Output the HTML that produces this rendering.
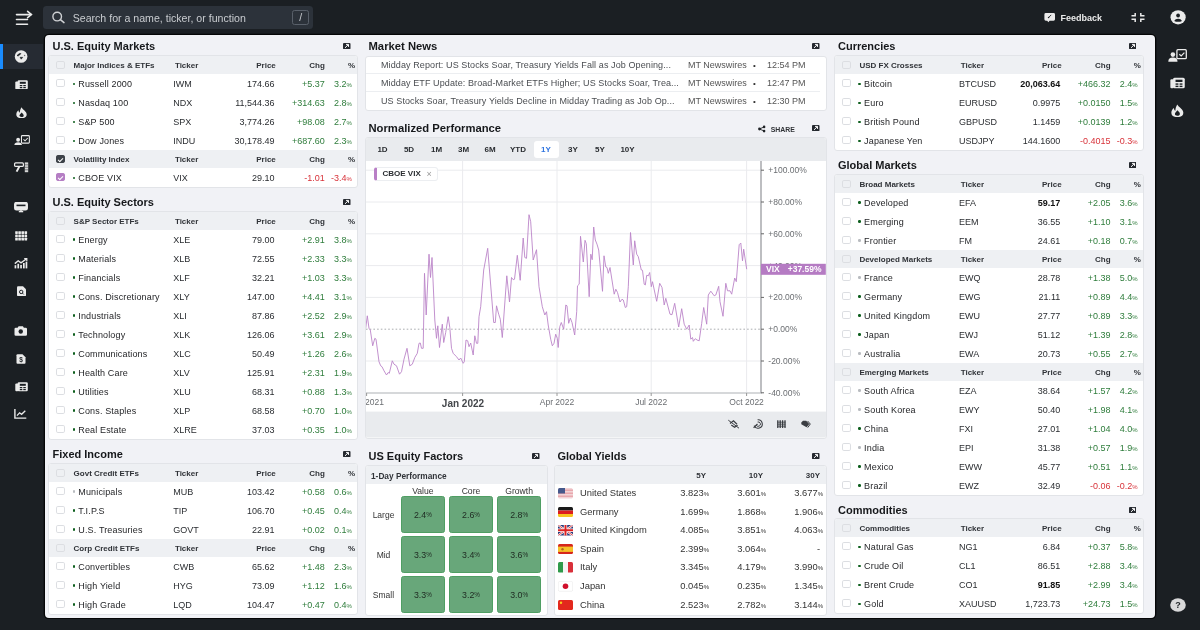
<!DOCTYPE html>
<html><head><meta charset="utf-8"><style>
*{margin:0;padding:0;box-sizing:border-box}
html,body{width:1200px;height:630px;overflow:hidden;-webkit-font-smoothing:antialiased;background:#1b1f23;font-family:"Liberation Sans",sans-serif;color:#2a2d31}
#panel{position:absolute;left:45px;top:35px;width:1110px;height:582.5px;background:#f1f2f6;border-radius:4px;box-shadow:0 0 0 1.3px #050607}
.ttl{position:absolute;font-weight:bold;font-size:11px;line-height:14px;color:#16181b;white-space:nowrap}
.exp{position:absolute}
.card{position:absolute;background:#fff;border:1px solid #e2e4e8;border-radius:3px;overflow:hidden;box-sizing:content-box;margin-left:-1px;margin-top:-1px}
.hd,.rw{position:absolute;left:0;right:0;height:18px;font-size:8px;white-space:nowrap}
.rw{height:19px;font-size:9px}
.hd{background:#eef0f3;font-weight:bold;color:#303338}
.hd span,.rw span{position:absolute;top:1px;line-height:18px}
.rw span{line-height:19px}
.cb{left:6.9px;top:5.2px!important;width:9px;height:8px;border:1px solid #dcdee2;border-radius:1.8px;background:#fff}
.hd .cb{top:5.2px!important;background:#eef0f3}
.cb.dark{background:#3d4249;border-color:#3d4249}
.cb.dark::after,.cb.purple::after{content:'';position:absolute;left:2.2px;top:0.6px;width:2.2px;height:4px;border:solid #fff;border-width:0 1.1px 1.1px 0;transform:rotate(45deg)}
.cb.purple{background:#b57ec4;border-color:#b57ec4}
.hl{left:24.6px}
.dot{left:23.6px;top:8.9px!important;width:2.4px;height:2.4px;background:#0e5f1e;border-radius:50%}
.dot.gray{background:#b9bcc0}
.nm{left:29.3px;color:#252629;letter-spacing:0.15px}
.tk{left:124.3px}
.hd .tk{left:125.9px}
.pr{right:82.5px;text-align:right}
.hd .pr{right:81.2px}
.pr.b{font-weight:bold;color:#111}
.ch{right:32.2px;text-align:right}
.pc{right:5.2px;text-align:right}
.hd .pc{right:2px}
.pc small{font-size:6px}
.nw{position:absolute;left:0;right:0;height:17.6px;font-size:9px;line-height:17.6px;color:#4a4d51;white-space:nowrap}
.nw:not(:last-child)::after{content:"";position:absolute;left:0;right:6px;top:16.6px;height:1px;background:#eceef1}
.nw span{position:absolute;top:0.7px}
.nt{left:15px;letter-spacing:0.1px}
.ns{left:322px;color:#555}
.nb{left:387px;color:#333;font-size:8px}
.ntm{left:401px;color:#555}
.fcol{position:absolute;top:19.6px;width:44.2px;text-align:center;font-size:8.6px;color:#333}
.frow{position:absolute;left:0;width:35px;text-align:center;font-size:8.5px;line-height:10px;color:#333}
.fcell{position:absolute;width:44.2px;height:37px;background:#68a77a;border:1px solid #4f9e63;border-radius:2.5px;text-align:center;line-height:37px;font-size:8.8px;color:#1f2a22}
.fcell small{font-size:6.3px;position:relative;top:-0.8px}
.yh{position:absolute;top:1px;line-height:18px}
.yr{position:absolute;left:0;right:0;height:18.6px;font-size:9.4px;line-height:18.6px;color:#333}
.yr span{position:absolute;top:0}
.flag{left:3px;top:4px!important;line-height:0}
.flag svg{border-radius:1.5px}
.yn{left:25px}
.yv small{font-size:6px}
.tab{position:absolute;top:0;width:30px;text-align:center;font-size:8px;font-weight:bold;line-height:23px}
.chip{position:absolute;height:14.5px;width:64px;background:#fff;border:1px solid #eceef1;border-left:3px solid #b97fc6;border-radius:3px;font-size:8px;line-height:12px;white-space:nowrap}
.chip span{position:absolute;left:6px;top:0.3px;font-weight:bold;color:#2a2d31}
.chip i{position:absolute;left:50px;top:0.3px;font-style:normal;color:#999;font-size:9px}

</style></head><body><div id="root" style="position:absolute;left:0;top:0;width:1200px;height:630px;will-change:transform">
<svg style="position:absolute;left:0;top:0" width="80" height="35" viewBox="0 0 80 35"><g stroke="#ebebeb" stroke-width="1.6" stroke-linecap="round" fill="none"><path d="M16.5 14.6H31M16.5 19.5H27.5M16.5 24.3H27.5"/><path d="M27.6 11.3L31.4 14.6L27.6 17.7"/></g></svg><div style="position:absolute;left:43px;top:6.3px;width:270.3px;height:22.5px;background:#2c323a;border-radius:3.5px"></div><svg style="position:absolute;left:43px;top:0" width="30" height="35" viewBox="43 0 30 35"><circle cx="57.2" cy="16.6" r="4.3" stroke="#cfd1d4" stroke-width="1.4" fill="none"/><path d="M60.4 19.6L64 22.6" stroke="#cfd1d4" stroke-width="1.5" stroke-linecap="round"/></svg><div style="position:absolute;left:72.7px;top:11px;font-size:10.6px;line-height:14px;color:#c9ccd0;white-space:nowrap">Search for a name, ticker, or function</div><div style="position:absolute;left:292px;top:10px;width:17.2px;height:15.3px;border:1px solid #59606a;border-radius:2.5px;color:#c9ccd0;font-size:10.5px;line-height:13.3px;text-align:center">/</div><svg style="position:absolute;left:1040px;top:8px" width="20" height="18" viewBox="1040 8 20 18"><path d="M1045.8 13H1053.6Q1055 13 1055 14.4V19.3Q1055 20.7 1053.6 20.7H1049.6L1048.3 22.3L1047.2 20.7H1045.8Q1044.4 20.7 1044.4 19.3V14.4Q1044.4 13 1045.8 13Z" fill="#ebebeb"/><path d="M1048.6 17.5L1051.2 14.9" stroke="#1b1f23" stroke-width="0.9"/><circle cx="1048.6" cy="17.5" r="0.8" fill="#1b1f23"/></svg><div style="position:absolute;left:1060.5px;top:11.5px;font-size:9px;font-weight:bold;line-height:12px;color:#ebebeb">Feedback</div><svg style="position:absolute;left:1130.7px;top:12.8px" width="14" height="9" viewBox="0 0 14 9"><g stroke="#ebebeb" stroke-width="1.5" fill="none"><path d="M0.5 2.8H4.2V0M0.5 6.2H4.2V9M13.5 2.8H9.8V0M13.5 6.2H9.8V9"/></g></svg><svg style="position:absolute;left:1168px;top:7px" width="20" height="21" viewBox="1168 7 20 21"><ellipse cx="1178.1" cy="17.3" rx="7.6" ry="7.1" fill="#ebebeb"/><circle cx="1178.1" cy="15.5" r="1.9" fill="#1b1f23"/><path d="M1174.2 20.9Q1175.2 18.8 1178.1 18.8Q1181 18.8 1182 20.9Q1180.2 21.8 1178.1 21.8Q1176 21.8 1174.2 20.9Z" fill="#1b1f23"/></svg><svg style="position:absolute;left:1169.5px;top:597.5px" width="16" height="14" viewBox="0 0 16 14"><ellipse cx="8" cy="7" rx="7.8" ry="6.8" fill="#d9d9da"/><text x="8" y="10" font-size="9" font-weight="bold" text-anchor="middle" fill="#1b1f23" font-family="Liberation Sans">?</text></svg><div style="position:absolute;left:0;top:44px;width:43px;height:25.3px;background:#262b33"></div><div style="position:absolute;left:0;top:44px;width:3.1px;height:25.3px;background:#1a8cff"></div><svg style="position:absolute;left:13px;top:48px" width="17" height="17" viewBox="13 48 17 17"><circle cx="21.1" cy="56.5" r="6.3" fill="#ebebeb"/><path d="M17 55.6L19.2 53.7L20.8 53.6L19.6 54.9L18.4 55.8Z" fill="#1b1f23" stroke="#1b1f23" stroke-width="0.8" stroke-linejoin="round"/><circle cx="24.6" cy="55.5" r="0.7" fill="#777"/><path d="M20 57.3L22.8 57.3L21.2 59.2Z" fill="#1b1f23" stroke="#1b1f23" stroke-width="0.5"/></svg><svg style="position:absolute;left:14.600000000000001px;top:79.65px" width="13" height="9.5" viewBox="0 0 13 9.5"><rect x="0.3" y="1.5" width="3" height="7.8" rx="1" fill="#ebebeb"/><rect x="2.6" y="0.2" width="10.2" height="9.1" rx="1.3" fill="#ebebeb"/><rect x="4.8" y="1.8" width="6" height="2" fill="#1b1f23"/><g fill="#1b1f23"><rect x="4.8" y="5" width="2.5" height="1.2"/><rect x="8.3" y="5" width="2.5" height="1.2"/><rect x="4.8" y="7" width="2.5" height="1.2"/><rect x="8.3" y="7" width="2.5" height="1.2"/></g></svg><svg style="position:absolute;left:15.7px;top:106.65px" width="11" height="11.5" viewBox="0 0 11 11.5"><path d="M5.5 0.3C6.5 2.6 10.7 4.5 10.7 7.4C10.7 10 8.4 11.3 5.5 11.3C2.6 11.3 0.3 10 0.3 7.4C0.3 5.5 1.4 4.2 2.5 3.3C2.5 4.6 3.1 5.4 3.8 5.7C3.8 3.6 4.6 1.8 5.5 0.3Z" fill="#ebebeb"/><path d="M5.6 5.4C6.6 6.5 7.7 7.3 7.7 8.5C7.7 9.6 6.8 10 5.5 10C4.3 10 3.4 9.5 3.4 8.6C3.4 7.6 4.6 6.7 5.6 5.4Z" fill="#1b1f23"/></svg><svg style="position:absolute;left:13.82px;top:134.54px" width="15.959999999999999" height="10.92" viewBox="0 0 19 13"><rect x="8.9" y="0.7" width="9.4" height="9" rx="1" stroke="#ebebeb" stroke-width="1.3" fill="none"/><path d="M11.3 5.2L13.2 7L16.4 3.6" stroke="#ebebeb" stroke-width="1.2" fill="none"/><circle cx="4.9" cy="5.6" r="2.3" fill="#ebebeb"/><path d="M0.3 12.8Q0.3 8.6 4.9 8.6Q9.5 8.6 9.5 12.8Z" fill="#ebebeb"/></svg><svg style="position:absolute;left:13.7px;top:162.05px" width="15" height="10.5" viewBox="0 0 15 10.5"><path d="M1.6 0.9H8.4Q9.4 0.9 9.4 1.9V3.4Q9.4 4.4 8.4 4.4H1.6Q0.6 4.4 0.6 3.4V1.9Q0.6 0.9 1.6 0.9Z" stroke="#ebebeb" stroke-width="1.2" fill="none"/><path d="M5.4 4.4L2.6 9.6" stroke="#ebebeb" stroke-width="2"/><rect x="10.8" y="0.4" width="3.4" height="9.8" fill="#d6d6d6"/><g stroke="#1b1f23" stroke-width="0.5"><path d="M10.8 2.8H14.2M10.8 5.3H14.2M10.8 7.8H14.2"/></g></svg><svg style="position:absolute;left:14.2px;top:202.25px" width="14" height="10.5" viewBox="0 0 14 10.5"><rect x="0.8" y="0.6" width="12.4" height="7.2" rx="1.6" stroke="#ebebeb" stroke-width="1.5" fill="#ebebeb"/><rect x="2.5" y="2.6" width="9" height="1.6" fill="#1b1f23"/><path d="M4.8 9.6H9.2" stroke="#ebebeb" stroke-width="1.4"/><rect x="6.3" y="7.8" width="1.4" height="1.8" fill="#ebebeb"/></svg><svg style="position:absolute;left:15.0px;top:230.8px" width="12.5" height="10" viewBox="0 0 12.5 10"><rect x="0.2" y="0.2" width="2.6" height="2.8" rx="0.4" fill="#ebebeb"/><rect x="3.3000000000000003" y="0.2" width="2.6" height="2.8" rx="0.4" fill="#ebebeb"/><rect x="6.4" y="0.2" width="2.6" height="2.8" rx="0.4" fill="#ebebeb"/><rect x="9.5" y="0.2" width="2.6" height="2.8" rx="0.4" fill="#ebebeb"/><rect x="0.2" y="3.5" width="2.6" height="2.8" rx="0.4" fill="#ebebeb"/><rect x="3.3000000000000003" y="3.5" width="2.6" height="2.8" rx="0.4" fill="#ebebeb"/><rect x="6.4" y="3.5" width="2.6" height="2.8" rx="0.4" fill="#ebebeb"/><rect x="9.5" y="3.5" width="2.6" height="2.8" rx="0.4" fill="#ebebeb"/><rect x="0.2" y="6.8" width="2.6" height="2.8" rx="0.4" fill="#ebebeb"/><rect x="3.3000000000000003" y="6.8" width="2.6" height="2.8" rx="0.4" fill="#ebebeb"/><rect x="6.4" y="6.8" width="2.6" height="2.8" rx="0.4" fill="#ebebeb"/><rect x="9.5" y="6.8" width="2.6" height="2.8" rx="0.4" fill="#ebebeb"/></svg><svg style="position:absolute;left:14.25px;top:258.05px" width="13.5" height="10.5" viewBox="0 0 13.5 10.5"><path d="M0.8 5.6L4.2 2.8L7 4.8L12.6 0.8" stroke="#ebebeb" stroke-width="1.4" fill="none"/><path d="M10.2 0.6H12.8V3.2" stroke="#ebebeb" stroke-width="1.2" fill="none"/><g fill="#ebebeb"><rect x="0.6" y="7.2" width="1.7" height="3.2"/><rect x="3.4" y="5.8" width="1.7" height="4.6"/><rect x="6.2" y="6.9" width="1.7" height="3.5"/><rect x="9" y="5" width="1.7" height="5.4"/><rect x="11.6" y="3.8" width="1.7" height="6.6"/></g></svg><svg style="position:absolute;left:15.7px;top:285.55px" width="11" height="10.5" viewBox="0 0 11 10.5"><path d="M1 1.4Q1 0.3 2.1 0.3H7L10 3.3V9.2Q10 10.2 9 10.2H2.1Q1 10.2 1 9.1Z" fill="#ebebeb"/><circle cx="5.2" cy="5.9" r="1.7" stroke="#1b1f23" stroke-width="1" fill="none"/><path d="M6.4 7.1L7.7 8.4" stroke="#1b1f23" stroke-width="1"/></svg><svg style="position:absolute;left:14.45px;top:326.2px" width="13.5" height="10" viewBox="0 0 13.5 10"><path d="M0.5 3Q0.5 1.7 1.8 1.7H3.6L4.6 0.3H8.9L9.9 1.7H11.7Q13 1.7 13 3V8.5Q13 9.7 11.7 9.7H1.8Q0.5 9.7 0.5 8.5Z" fill="#ebebeb"/><circle cx="6.75" cy="5.5" r="2.2" fill="#1b1f23"/></svg><svg style="position:absolute;left:16.2px;top:354.0px" width="10" height="10" viewBox="0 0 10 10"><path d="M0.5 1.3Q0.5 0.2 1.6 0.2H6.5L9.5 3.2V8.8Q9.5 9.8 8.5 9.8H1.6Q0.5 9.8 0.5 8.7Z" fill="#ebebeb"/><text x="5" y="8.4" font-size="6.5" font-weight="bold" text-anchor="middle" fill="#1b1f23" font-family="Liberation Sans">$</text></svg><svg style="position:absolute;left:14.7px;top:382.25px" width="13" height="9.5" viewBox="0 0 13 9.5"><rect x="0.3" y="1.5" width="3" height="7.8" rx="1" fill="#ebebeb"/><rect x="2.6" y="0.2" width="10.2" height="9.1" rx="1.3" fill="#ebebeb"/><rect x="4.8" y="1.8" width="6" height="2" fill="#1b1f23"/><g fill="#1b1f23"><rect x="4.8" y="5" width="2.5" height="1.2"/><rect x="8.3" y="5" width="2.5" height="1.2"/><rect x="4.8" y="7" width="2.5" height="1.2"/><rect x="8.3" y="7" width="2.5" height="1.2"/></g></svg><svg style="position:absolute;left:14.45px;top:409.1px" width="12.5" height="10" viewBox="0 0 12.5 10"><path d="M0.9 0V9.1H12.3" stroke="#ebebeb" stroke-width="1.4" fill="none"/><path d="M3 6.6L5.6 3.8L7.6 5.3L11.3 1.8" stroke="#ebebeb" stroke-width="1.3" fill="none"/></svg><svg style="position:absolute;left:1167.8px;top:48.8px" width="19.0" height="13.0" viewBox="0 0 19 13"><rect x="8.9" y="0.7" width="9.4" height="9" rx="1" stroke="#ebebeb" stroke-width="1.3" fill="none"/><path d="M11.3 5.2L13.2 7L16.4 3.6" stroke="#ebebeb" stroke-width="1.2" fill="none"/><circle cx="4.9" cy="5.6" r="2.3" fill="#ebebeb"/><path d="M0.3 12.8Q0.3 8.6 4.9 8.6Q9.5 8.6 9.5 12.8Z" fill="#ebebeb"/></svg><svg style="position:absolute;left:1170.2px;top:76.9px" width="15" height="12.2" viewBox="0 0 13 9.5"><rect x="0.3" y="1.5" width="3" height="7.8" rx="1" fill="#ebebeb"/><rect x="2.6" y="0.2" width="10.2" height="9.1" rx="1.3" fill="#ebebeb"/><rect x="4.8" y="1.8" width="6" height="2" fill="#1b1f23"/><g fill="#1b1f23"><rect x="4.8" y="5" width="2.5" height="1.2"/><rect x="8.3" y="5" width="2.5" height="1.2"/><rect x="4.8" y="7" width="2.5" height="1.2"/><rect x="8.3" y="7" width="2.5" height="1.2"/></g></svg><svg style="position:absolute;left:1170.95px;top:103.75px" width="12.7" height="13.5" viewBox="0 0 11 11.5"><path d="M5.5 0.3C6.5 2.6 10.7 4.5 10.7 7.4C10.7 10 8.4 11.3 5.5 11.3C2.6 11.3 0.3 10 0.3 7.4C0.3 5.5 1.4 4.2 2.5 3.3C2.5 4.6 3.1 5.4 3.8 5.7C3.8 3.6 4.6 1.8 5.5 0.3Z" fill="#ebebeb"/><path d="M5.6 5.4C6.6 6.5 7.7 7.3 7.7 8.5C7.7 9.6 6.8 10 5.5 10C4.3 10 3.4 9.5 3.4 8.6C3.4 7.6 4.6 6.7 5.6 5.4Z" fill="#1b1f23"/></svg>
<div id="panel"></div>
<div class="ttl" style="left:52.5px;top:39.2px">U.S. Equity Markets</div><svg class="exp" style="left:343px;top:43.3px" width="7.5" height="6.2" viewBox="0 0 7.5 6.2"><rect width="7.5" height="6.2" rx="1" fill="#262a30"/><path d="M2 4.9L5.3 1.6M3 1.4H5.5V3.9" stroke="#fff" stroke-width="1" fill="none"/></svg>
<div class="card" style="left:49px;top:56px;width:308px;height:131px"><div class="hd" style="top:0px"><span class="cb hcb"></span><span class="hl">Major Indices &amp; ETFs</span><span class="tk">Ticker</span><span class="pr">Price</span><span class="ch">Chg</span><span class="pc">%</span></div><div class="rw" style="top:18px"><span class="cb"></span><span class="dot "></span><span class="nm">Russell 2000</span><span class="tk">IWM</span><span class="pr">174.66</span><span class="ch" style="color:#2f7d3c">+5.37</span><span class="pc" style="color:#2f7d3c">3.2<small>%</small></span></div><div class="rw" style="top:37px"><span class="cb"></span><span class="dot "></span><span class="nm">Nasdaq 100</span><span class="tk">NDX</span><span class="pr">11,544.36</span><span class="ch" style="color:#2f7d3c">+314.63</span><span class="pc" style="color:#2f7d3c">2.8<small>%</small></span></div><div class="rw" style="top:56px"><span class="cb"></span><span class="dot "></span><span class="nm">S&amp;P 500</span><span class="tk">SPX</span><span class="pr">3,774.26</span><span class="ch" style="color:#2f7d3c">+98.08</span><span class="pc" style="color:#2f7d3c">2.7<small>%</small></span></div><div class="rw" style="top:75px"><span class="cb"></span><span class="dot "></span><span class="nm">Dow Jones</span><span class="tk">INDU</span><span class="pr">30,178.49</span><span class="ch" style="color:#2f7d3c">+687.60</span><span class="pc" style="color:#2f7d3c">2.3<small>%</small></span></div><div class="hd" style="top:94px"><span class="cb hcb dark"></span><span class="hl">Volatility Index</span><span class="tk">Ticker</span><span class="pr">Price</span><span class="ch">Chg</span><span class="pc">%</span></div><div class="rw" style="top:112px"><span class="cb purple"></span><span class="dot "></span><span class="nm">CBOE VIX</span><span class="tk">VIX</span><span class="pr">29.10</span><span class="ch" style="color:#d8333a">-1.01</span><span class="pc" style="color:#d8333a">-3.4<small>%</small></span></div></div>
<div class="ttl" style="left:52.5px;top:195.2px">U.S. Equity Sectors</div><svg class="exp" style="left:343px;top:199.3px" width="7.5" height="6.2" viewBox="0 0 7.5 6.2"><rect width="7.5" height="6.2" rx="1" fill="#262a30"/><path d="M2 4.9L5.3 1.6M3 1.4H5.5V3.9" stroke="#fff" stroke-width="1" fill="none"/></svg>
<div class="card" style="left:49px;top:211.5px;width:308px;height:227px"><div class="hd" style="top:0px"><span class="cb hcb"></span><span class="hl">S&amp;P Sector ETFs</span><span class="tk">Ticker</span><span class="pr">Price</span><span class="ch">Chg</span><span class="pc">%</span></div><div class="rw" style="top:18px"><span class="cb"></span><span class="dot "></span><span class="nm">Energy</span><span class="tk">XLE</span><span class="pr">79.00</span><span class="ch" style="color:#2f7d3c">+2.91</span><span class="pc" style="color:#2f7d3c">3.8<small>%</small></span></div><div class="rw" style="top:37px"><span class="cb"></span><span class="dot "></span><span class="nm">Materials</span><span class="tk">XLB</span><span class="pr">72.55</span><span class="ch" style="color:#2f7d3c">+2.33</span><span class="pc" style="color:#2f7d3c">3.3<small>%</small></span></div><div class="rw" style="top:56px"><span class="cb"></span><span class="dot "></span><span class="nm">Financials</span><span class="tk">XLF</span><span class="pr">32.21</span><span class="ch" style="color:#2f7d3c">+1.03</span><span class="pc" style="color:#2f7d3c">3.3<small>%</small></span></div><div class="rw" style="top:75px"><span class="cb"></span><span class="dot "></span><span class="nm">Cons. Discretionary</span><span class="tk">XLY</span><span class="pr">147.00</span><span class="ch" style="color:#2f7d3c">+4.41</span><span class="pc" style="color:#2f7d3c">3.1<small>%</small></span></div><div class="rw" style="top:94px"><span class="cb"></span><span class="dot "></span><span class="nm">Industrials</span><span class="tk">XLI</span><span class="pr">87.86</span><span class="ch" style="color:#2f7d3c">+2.52</span><span class="pc" style="color:#2f7d3c">2.9<small>%</small></span></div><div class="rw" style="top:113px"><span class="cb"></span><span class="dot "></span><span class="nm">Technology</span><span class="tk">XLK</span><span class="pr">126.06</span><span class="ch" style="color:#2f7d3c">+3.61</span><span class="pc" style="color:#2f7d3c">2.9<small>%</small></span></div><div class="rw" style="top:132px"><span class="cb"></span><span class="dot "></span><span class="nm">Communications</span><span class="tk">XLC</span><span class="pr">50.49</span><span class="ch" style="color:#2f7d3c">+1.26</span><span class="pc" style="color:#2f7d3c">2.6<small>%</small></span></div><div class="rw" style="top:151px"><span class="cb"></span><span class="dot "></span><span class="nm">Health Care</span><span class="tk">XLV</span><span class="pr">125.91</span><span class="ch" style="color:#2f7d3c">+2.31</span><span class="pc" style="color:#2f7d3c">1.9<small>%</small></span></div><div class="rw" style="top:170px"><span class="cb"></span><span class="dot "></span><span class="nm">Utilities</span><span class="tk">XLU</span><span class="pr">68.31</span><span class="ch" style="color:#2f7d3c">+0.88</span><span class="pc" style="color:#2f7d3c">1.3<small>%</small></span></div><div class="rw" style="top:189px"><span class="cb"></span><span class="dot "></span><span class="nm">Cons. Staples</span><span class="tk">XLP</span><span class="pr">68.58</span><span class="ch" style="color:#2f7d3c">+0.70</span><span class="pc" style="color:#2f7d3c">1.0<small>%</small></span></div><div class="rw" style="top:208px"><span class="cb"></span><span class="dot "></span><span class="nm">Real Estate</span><span class="tk">XLRE</span><span class="pr">37.03</span><span class="ch" style="color:#2f7d3c">+0.35</span><span class="pc" style="color:#2f7d3c">1.0<small>%</small></span></div></div>
<div class="ttl" style="left:52.5px;top:447.2px">Fixed Income</div><svg class="exp" style="left:343px;top:451.3px" width="7.5" height="6.2" viewBox="0 0 7.5 6.2"><rect width="7.5" height="6.2" rx="1" fill="#262a30"/><path d="M2 4.9L5.3 1.6M3 1.4H5.5V3.9" stroke="#fff" stroke-width="1" fill="none"/></svg>
<div class="card" style="left:49px;top:463.5px;width:308px;height:150px"><div class="hd" style="top:0px"><span class="cb hcb"></span><span class="hl">Govt Credit ETFs</span><span class="tk">Ticker</span><span class="pr">Price</span><span class="ch">Chg</span><span class="pc">%</span></div><div class="rw" style="top:18px"><span class="cb"></span><span class="dot gray"></span><span class="nm">Municipals</span><span class="tk">MUB</span><span class="pr">103.42</span><span class="ch" style="color:#2f7d3c">+0.58</span><span class="pc" style="color:#2f7d3c">0.6<small>%</small></span></div><div class="rw" style="top:37px"><span class="cb"></span><span class="dot "></span><span class="nm">T.I.P.S</span><span class="tk">TIP</span><span class="pr">106.70</span><span class="ch" style="color:#2f7d3c">+0.45</span><span class="pc" style="color:#2f7d3c">0.4<small>%</small></span></div><div class="rw" style="top:56px"><span class="cb"></span><span class="dot "></span><span class="nm">U.S. Treasuries</span><span class="tk">GOVT</span><span class="pr">22.91</span><span class="ch" style="color:#2f7d3c">+0.02</span><span class="pc" style="color:#2f7d3c">0.1<small>%</small></span></div><div class="hd" style="top:75px"><span class="cb hcb"></span><span class="hl">Corp Credit ETFs</span><span class="tk">Ticker</span><span class="pr">Price</span><span class="ch">Chg</span><span class="pc">%</span></div><div class="rw" style="top:93px"><span class="cb"></span><span class="dot "></span><span class="nm">Convertibles</span><span class="tk">CWB</span><span class="pr">65.62</span><span class="ch" style="color:#2f7d3c">+1.48</span><span class="pc" style="color:#2f7d3c">2.3<small>%</small></span></div><div class="rw" style="top:112px"><span class="cb"></span><span class="dot "></span><span class="nm">High Yield</span><span class="tk">HYG</span><span class="pr">73.09</span><span class="ch" style="color:#2f7d3c">+1.12</span><span class="pc" style="color:#2f7d3c">1.6<small>%</small></span></div><div class="rw" style="top:131px"><span class="cb"></span><span class="dot "></span><span class="nm">High Grade</span><span class="tk">LQD</span><span class="pr">104.47</span><span class="ch" style="color:#2f7d3c">+0.47</span><span class="pc" style="color:#2f7d3c">0.4<small>%</small></span></div></div>
<div class="ttl" style="left:838px;top:39.2px">Currencies</div><svg class="exp" style="left:1128.5px;top:43.3px" width="7.5" height="6.2" viewBox="0 0 7.5 6.2"><rect width="7.5" height="6.2" rx="1" fill="#262a30"/><path d="M2 4.9L5.3 1.6M3 1.4H5.5V3.9" stroke="#fff" stroke-width="1" fill="none"/></svg>
<div class="card" style="left:834.8px;top:56px;width:308px;height:94px"><div class="hd" style="top:0px"><span class="cb hcb"></span><span class="hl">USD FX Crosses</span><span class="tk">Ticker</span><span class="pr">Price</span><span class="ch">Chg</span><span class="pc">%</span></div><div class="rw" style="top:18px"><span class="cb"></span><span class="dot "></span><span class="nm">Bitcoin</span><span class="tk">BTCUSD</span><span class="pr b">20,063.64</span><span class="ch" style="color:#2f7d3c">+466.32</span><span class="pc" style="color:#2f7d3c">2.4<small>%</small></span></div><div class="rw" style="top:37px"><span class="cb"></span><span class="dot "></span><span class="nm">Euro</span><span class="tk">EURUSD</span><span class="pr">0.9975</span><span class="ch" style="color:#2f7d3c">+0.0150</span><span class="pc" style="color:#2f7d3c">1.5<small>%</small></span></div><div class="rw" style="top:56px"><span class="cb"></span><span class="dot "></span><span class="nm">British Pound</span><span class="tk">GBPUSD</span><span class="pr">1.1459</span><span class="ch" style="color:#2f7d3c">+0.0139</span><span class="pc" style="color:#2f7d3c">1.2<small>%</small></span></div><div class="rw" style="top:75px"><span class="cb"></span><span class="dot "></span><span class="nm">Japanese Yen</span><span class="tk">USDJPY</span><span class="pr">144.1600</span><span class="ch" style="color:#d8333a">-0.4015</span><span class="pc" style="color:#d8333a">-0.3<small>%</small></span></div></div>
<div class="ttl" style="left:838px;top:158.2px">Global Markets</div><svg class="exp" style="left:1128.5px;top:162.3px" width="7.5" height="6.2" viewBox="0 0 7.5 6.2"><rect width="7.5" height="6.2" rx="1" fill="#262a30"/><path d="M2 4.9L5.3 1.6M3 1.4H5.5V3.9" stroke="#fff" stroke-width="1" fill="none"/></svg>
<div class="card" style="left:834.8px;top:174.5px;width:308px;height:320px"><div class="hd" style="top:0px"><span class="cb hcb"></span><span class="hl">Broad Markets</span><span class="tk">Ticker</span><span class="pr">Price</span><span class="ch">Chg</span><span class="pc">%</span></div><div class="rw" style="top:18px"><span class="cb"></span><span class="dot "></span><span class="nm">Developed</span><span class="tk">EFA</span><span class="pr b">59.17</span><span class="ch" style="color:#2f7d3c">+2.05</span><span class="pc" style="color:#2f7d3c">3.6<small>%</small></span></div><div class="rw" style="top:37px"><span class="cb"></span><span class="dot "></span><span class="nm">Emerging</span><span class="tk">EEM</span><span class="pr">36.55</span><span class="ch" style="color:#2f7d3c">+1.10</span><span class="pc" style="color:#2f7d3c">3.1<small>%</small></span></div><div class="rw" style="top:56px"><span class="cb"></span><span class="dot gray"></span><span class="nm">Frontier</span><span class="tk">FM</span><span class="pr">24.61</span><span class="ch" style="color:#2f7d3c">+0.18</span><span class="pc" style="color:#2f7d3c">0.7<small>%</small></span></div><div class="hd" style="top:75px"><span class="cb hcb"></span><span class="hl">Developed Markets</span><span class="tk">Ticker</span><span class="pr">Price</span><span class="ch">Chg</span><span class="pc">%</span></div><div class="rw" style="top:93px"><span class="cb"></span><span class="dot gray"></span><span class="nm">France</span><span class="tk">EWQ</span><span class="pr">28.78</span><span class="ch" style="color:#2f7d3c">+1.38</span><span class="pc" style="color:#2f7d3c">5.0<small>%</small></span></div><div class="rw" style="top:112px"><span class="cb"></span><span class="dot "></span><span class="nm">Germany</span><span class="tk">EWG</span><span class="pr">21.11</span><span class="ch" style="color:#2f7d3c">+0.89</span><span class="pc" style="color:#2f7d3c">4.4<small>%</small></span></div><div class="rw" style="top:131px"><span class="cb"></span><span class="dot "></span><span class="nm">United Kingdom</span><span class="tk">EWU</span><span class="pr">27.77</span><span class="ch" style="color:#2f7d3c">+0.89</span><span class="pc" style="color:#2f7d3c">3.3<small>%</small></span></div><div class="rw" style="top:150px"><span class="cb"></span><span class="dot "></span><span class="nm">Japan</span><span class="tk">EWJ</span><span class="pr">51.12</span><span class="ch" style="color:#2f7d3c">+1.39</span><span class="pc" style="color:#2f7d3c">2.8<small>%</small></span></div><div class="rw" style="top:169px"><span class="cb"></span><span class="dot gray"></span><span class="nm">Australia</span><span class="tk">EWA</span><span class="pr">20.73</span><span class="ch" style="color:#2f7d3c">+0.55</span><span class="pc" style="color:#2f7d3c">2.7<small>%</small></span></div><div class="hd" style="top:188px"><span class="cb hcb"></span><span class="hl">Emerging Markets</span><span class="tk">Ticker</span><span class="pr">Price</span><span class="ch">Chg</span><span class="pc">%</span></div><div class="rw" style="top:206px"><span class="cb"></span><span class="dot gray"></span><span class="nm">South Africa</span><span class="tk">EZA</span><span class="pr">38.64</span><span class="ch" style="color:#2f7d3c">+1.57</span><span class="pc" style="color:#2f7d3c">4.2<small>%</small></span></div><div class="rw" style="top:225px"><span class="cb"></span><span class="dot gray"></span><span class="nm">South Korea</span><span class="tk">EWY</span><span class="pr">50.40</span><span class="ch" style="color:#2f7d3c">+1.98</span><span class="pc" style="color:#2f7d3c">4.1<small>%</small></span></div><div class="rw" style="top:244px"><span class="cb"></span><span class="dot "></span><span class="nm">China</span><span class="tk">FXI</span><span class="pr">27.01</span><span class="ch" style="color:#2f7d3c">+1.04</span><span class="pc" style="color:#2f7d3c">4.0<small>%</small></span></div><div class="rw" style="top:263px"><span class="cb"></span><span class="dot gray"></span><span class="nm">India</span><span class="tk">EPI</span><span class="pr">31.38</span><span class="ch" style="color:#2f7d3c">+0.57</span><span class="pc" style="color:#2f7d3c">1.9<small>%</small></span></div><div class="rw" style="top:282px"><span class="cb"></span><span class="dot "></span><span class="nm">Mexico</span><span class="tk">EWW</span><span class="pr">45.77</span><span class="ch" style="color:#2f7d3c">+0.51</span><span class="pc" style="color:#2f7d3c">1.1<small>%</small></span></div><div class="rw" style="top:301px"><span class="cb"></span><span class="dot "></span><span class="nm">Brazil</span><span class="tk">EWZ</span><span class="pr">32.49</span><span class="ch" style="color:#d8333a">-0.06</span><span class="pc" style="color:#d8333a">-0.2<small>%</small></span></div></div>
<div class="ttl" style="left:838px;top:503.2px">Commodities</div><svg class="exp" style="left:1128.5px;top:507.3px" width="7.5" height="6.2" viewBox="0 0 7.5 6.2"><rect width="7.5" height="6.2" rx="1" fill="#262a30"/><path d="M2 4.9L5.3 1.6M3 1.4H5.5V3.9" stroke="#fff" stroke-width="1" fill="none"/></svg>
<div class="card" style="left:834.8px;top:519px;width:308px;height:94px"><div class="hd" style="top:0px"><span class="cb hcb"></span><span class="hl">Commodities</span><span class="tk">Ticker</span><span class="pr">Price</span><span class="ch">Chg</span><span class="pc">%</span></div><div class="rw" style="top:18px"><span class="cb"></span><span class="dot "></span><span class="nm">Natural Gas</span><span class="tk">NG1</span><span class="pr">6.84</span><span class="ch" style="color:#2f7d3c">+0.37</span><span class="pc" style="color:#2f7d3c">5.8<small>%</small></span></div><div class="rw" style="top:37px"><span class="cb"></span><span class="dot "></span><span class="nm">Crude Oil</span><span class="tk">CL1</span><span class="pr">86.51</span><span class="ch" style="color:#2f7d3c">+2.88</span><span class="pc" style="color:#2f7d3c">3.4<small>%</small></span></div><div class="rw" style="top:56px"><span class="cb"></span><span class="dot "></span><span class="nm">Brent Crude</span><span class="tk">CO1</span><span class="pr b">91.85</span><span class="ch" style="color:#2f7d3c">+2.99</span><span class="pc" style="color:#2f7d3c">3.4<small>%</small></span></div><div class="rw" style="top:75px"><span class="cb"></span><span class="dot "></span><span class="nm">Gold</span><span class="tk">XAUUSD</span><span class="pr">1,723.73</span><span class="ch" style="color:#2f7d3c">+24.73</span><span class="pc" style="color:#2f7d3c">1.5<small>%</small></span></div></div>
<div class="ttl" style="font-size:11.25px;left:368.5px;top:39.2px">Market News</div><svg class="exp" style="left:812px;top:43.3px" width="7.5" height="6.2" viewBox="0 0 7.5 6.2"><rect width="7.5" height="6.2" rx="1" fill="#262a30"/><path d="M2 4.9L5.3 1.6M3 1.4H5.5V3.9" stroke="#fff" stroke-width="1" fill="none"/></svg>
<div class="card" style="left:366px;top:56.8px;width:460px;height:53px"><div class="nw" style="top:0.0px"><span class="nt">Midday Report: US Stocks Soar, Treasury Yields Fall as Job Opening...</span><span class="ns">MT Newswires</span><span class="nb">&#8226;</span><span class="ntm">12:54 PM</span></div><div class="nw" style="top:17.6px"><span class="nt">Midday ETF Update: Broad-Market ETFs Higher; US Stocks Soar, Trea...</span><span class="ns">MT Newswires</span><span class="nb">&#8226;</span><span class="ntm">12:47 PM</span></div><div class="nw" style="top:35.2px"><span class="nt">US Stocks Soar, Treasury Yields Decline in Midday Trading as Job Op...</span><span class="ns">MT Newswires</span><span class="nb">&#8226;</span><span class="ntm">12:30 PM</span></div></div>
<div class="ttl" style="font-size:11.25px;left:368.5px;top:121.2px">Normalized Performance</div><svg class="exp" style="left:812px;top:125.3px" width="7.5" height="6.2" viewBox="0 0 7.5 6.2"><rect width="7.5" height="6.2" rx="1" fill="#262a30"/><path d="M2 4.9L5.3 1.6M3 1.4H5.5V3.9" stroke="#fff" stroke-width="1" fill="none"/></svg>
<div class="card" style="left:366px;top:138px;width:460px;height:299.5px"><svg width="460" height="299.5" viewBox="0 0 460 299.5" style="position:absolute;left:0;top:0"><rect x="0" y="0" width="460" height="23" fill="#e9ebee"/><rect x="0" y="273.6" width="460" height="25.899999999999977" fill="#e9ebee"/><line x1="0" x2="395" y1="32.19999999999999" y2="32.19999999999999" stroke="#eaebee" stroke-width="1"/><line x1="0" x2="395" y1="64.0" y2="64.0" stroke="#eaebee" stroke-width="1"/><line x1="0" x2="395" y1="95.79999999999998" y2="95.79999999999998" stroke="#eaebee" stroke-width="1"/><line x1="0" x2="395" y1="127.59999999999997" y2="127.59999999999997" stroke="#eaebee" stroke-width="1"/><line x1="0" x2="395" y1="159.39999999999998" y2="159.39999999999998" stroke="#eaebee" stroke-width="1"/><line x1="0" x2="395" y1="223.0" y2="223.0" stroke="#eaebee" stroke-width="1"/><line x1="96.60000000000002" x2="96.60000000000002" y1="23" y2="255" stroke="#eaebee" stroke-width="1"/><line x1="191" x2="191" y1="23" y2="255" stroke="#eaebee" stroke-width="1"/><line x1="285.20000000000005" x2="285.20000000000005" y1="23" y2="255" stroke="#eaebee" stroke-width="1"/><line x1="380.6" x2="380.6" y1="23" y2="255" stroke="#eaebee" stroke-width="1"/><line x1="0" x2="395" y1="191.2" y2="191.2" stroke="#8f9296" stroke-width="0.75" stroke-dasharray="1.6,2.1"/><line x1="0" x2="396" y1="255" y2="255" stroke="#c9cbce" stroke-width="1.6"/><line x1="395" x2="395" y1="23" y2="255" stroke="#a7a9ac" stroke-width="1.5"/><line x1="0.6000000000000227" x2="0.6000000000000227" y1="255" y2="258" stroke="#999" stroke-width="1"/><line x1="96.60000000000002" x2="96.60000000000002" y1="255" y2="258" stroke="#999" stroke-width="1"/><line x1="191" x2="191" y1="255" y2="258" stroke="#999" stroke-width="1"/><line x1="285.20000000000005" x2="285.20000000000005" y1="255" y2="258" stroke="#999" stroke-width="1"/><line x1="380.6" x2="380.6" y1="255" y2="258" stroke="#999" stroke-width="1"/><line x1="395" x2="398" y1="32.19999999999999" y2="32.19999999999999" stroke="#666" stroke-width="1"/><line x1="395" x2="398" y1="64.0" y2="64.0" stroke="#666" stroke-width="1"/><line x1="395" x2="398" y1="95.79999999999998" y2="95.79999999999998" stroke="#666" stroke-width="1"/><line x1="395" x2="398" y1="127.59999999999997" y2="127.59999999999997" stroke="#666" stroke-width="1"/><line x1="395" x2="398" y1="159.39999999999998" y2="159.39999999999998" stroke="#666" stroke-width="1"/><line x1="395" x2="398" y1="191.2" y2="191.2" stroke="#666" stroke-width="1"/><line x1="395" x2="398" y1="223.0" y2="223.0" stroke="#666" stroke-width="1"/><line x1="395" x2="398" y1="254.8" y2="254.8" stroke="#666" stroke-width="1"/><text x="402.29999999999995" y="35.19999999999999" font-size="8.5" fill="#6b6e72">+100.00%</text><text x="402.29999999999995" y="67.0" font-size="8.5" fill="#6b6e72">+80.00%</text><text x="402.29999999999995" y="98.79999999999998" font-size="8.5" fill="#6b6e72">+60.00%</text><text x="402.29999999999995" y="130.59999999999997" font-size="8.5" fill="#6b6e72">+40.00%</text><text x="402.29999999999995" y="162.39999999999998" font-size="8.5" fill="#6b6e72">+20.00%</text><text x="402.29999999999995" y="194.2" font-size="8.5" fill="#6b6e72">+0.00%</text><text x="402.29999999999995" y="226.0" font-size="8.5" fill="#6b6e72">-20.00%</text><text x="402.29999999999995" y="257.8" font-size="8.5" fill="#6b6e72">-40.00%</text><text x="-1" y="267.2" font-size="8.5" fill="#6b6e72">2021</text><text x="97" y="269.3" font-size="10" font-weight="bold" fill="#44474b" text-anchor="middle">Jan 2022</text><text x="191" y="267.2" font-size="8.5" fill="#6b6e72" text-anchor="middle">Apr 2022</text><text x="285.20000000000005" y="267.2" font-size="8.5" fill="#6b6e72" text-anchor="middle">Jul 2022</text><text x="380.6" y="267.2" font-size="8.5" fill="#6b6e72" text-anchor="middle">Oct 2022</text><polyline points="-0.3,190.3 1.3,177.8 3,190.3 4.3,192 6.7,207.8 8.8,200.3 10,201.2 13,223.7 14.7,227.8 16,228.7 18,232.8 20.5,237 22.2,234.5 23.3,235.3 26.3,222.8 28,226.2 30.5,227.8 33.5,236.2 35.5,233.7 38,221.2 41,210.3 43.8,227.8 46.3,226.2 48.8,219.5 51.3,215.3 53,205.3 54.3,205 55.5,210.3 57.2,210.3 58.5,135.3 60.2,177 63,116.2 64.5,139.5 66,119.5 68.8,182 70.5,200.3 71.8,187.8 73.5,209.5 76.3,186.2 77.7,204.5 79.7,194.5 82.2,178.7 83.8,189.5 85.5,210.3 87.2,215.3 90.5,218.7 93,222 94.7,220 97.2,225.3 98.3,223.7 100,202 101.7,202.8 103,208.7 104.7,205 107.2,217 108.8,197.8 110.5,205.3 111.8,205.3 113,178.7 114.7,168.7 117.7,132 121.7,110.3 126.3,167 127.7,184.5 129.3,184.5 130.5,167.8 132.7,176.2 134.3,181.2 136.3,199.5 140.8,137.8 143.5,164 145.5,139.5 147.2,141.7 148.5,141.2 151.3,117.3 154.2,142.3 157.2,100 158.8,119.5 160.5,120.3 163,76.7 164.7,83.7 167.2,122 170.5,111.7 173,148.7 176.3,168.7 178.8,177 180.5,173.7 182.2,187 184.7,201.2 186.3,207.8 188,205.3 189.7,196.2 191.3,200.3 192.2,209.5 193.8,188.7 195.3,184.5 197.7,191.2 199.8,167 201,167.8 202.7,185.3 204.3,180 206,184.5 208.7,197 210.7,173.7 211.5,147.8 213.2,146.2 214.5,98.3 217.3,124 219,102.3 220.3,105.7 223.2,158.7 224.8,116.2 226.2,121.7 227.7,89 229.3,102 231,106.2 232.7,112 236.5,153.3 238,117.8 239.8,129 241,129.5 242.3,135.3 244,129.5 248.2,156.2 249.8,151.2 251.5,154.5 254,164 256,161.2 257.3,162 259.3,169.5 260.7,168.7 262.3,148.7 264.5,94.5 267.3,127 268.7,102.8 270.7,116.2 272.3,118.7 275.3,132 276.5,132.3 278.2,146.2 279.3,147 280.7,137.3 282.3,137.8 283.7,134.5 285.3,148.7 286.5,143.7 290.7,163.3 293.7,145.3 296,149.5 298.2,167 299.8,160.3 304,176.2 306,176.7 308.7,165.3 312.7,189 315.7,170.7 318.2,186.2 320.7,191.2 323.2,187 324.8,201.2 326.5,199.5 327.3,203.3 329.3,200.7 331,202 333.2,202.8 335.7,185.3 337.7,169.5 340.7,186.2 342.3,157 344.8,153.2 348.2,157.8 349.8,157 352.7,148.3 354,163.7 357,178.3 359.8,145.3 361.5,152.8 364,152.8 365.7,156.2 368.7,140 370.3,143.7 373.2,106.7 374.8,105 376.5,122.8 377.7,111.2 380.7,131.2" fill="none" stroke="#bb84c8" stroke-width="0.9" stroke-linejoin="round"/><rect x="395" y="125.80000000000001" width="64.79999999999995" height="11" fill="#b57bc3"/><text x="400" y="134.3" font-size="8.5" font-weight="bold" fill="#fff">VIX</text><text x="455.5" y="134.3" font-size="8.5" font-weight="bold" fill="#fff" text-anchor="end">+37.59%</text></svg><div class="tab" style="left:1.5px;color:#2a2d31">1D</div><div class="tab" style="left:28px;color:#2a2d31">5D</div><div class="tab" style="left:55.5px;color:#2a2d31">1M</div><div class="tab" style="left:82.5px;color:#2a2d31">3M</div><div class="tab" style="left:109px;color:#2a2d31">6M</div><div class="tab" style="left:137px;color:#2a2d31">YTD</div><div style="position:absolute;left:167.75px;top:3px;width:25px;height:17px;background:#fff;border-radius:3px"></div><div class="tab" style="left:165px;color:#2f74e0">1Y</div><div class="tab" style="left:192px;color:#2a2d31">3Y</div><div class="tab" style="left:219px;color:#2a2d31">5Y</div><div class="tab" style="left:246.5px;color:#2a2d31">10Y</div><div class="chip" style="left:7.5px;top:28.5px"><span>CBOE VIX</span><i>&#215;</i></div><div class="ficons" style="top:280px"></div></div>
<svg style="position:absolute;left:722px;top:414px" width="96" height="20" viewBox="722 414 96 20"><g stroke="#3a3d42" fill="none" stroke-width="1"><path d="M728.3 420.2L739 428.2"/><path d="M730 423.5L733.5 420.8L737 424.2M731.3 425L734.6 427.3L737.6 425.2" stroke-width="1.2"/><path d="M757.6 419.8A4.2 4.2 0 1 1 754.2 425.6" stroke-width="1.1"/><path d="M757.6 422A2.2 2.2 0 1 1 756.3 425.2" stroke-width="1"/><path d="M753.6 427.8L757.5 424" stroke-width="1.2"/><path d="M777.8 420.3V428M780.2 420.3V428M782.6 420.3V428M785 420.3V428" stroke-width="1.3"/><path d="M777.3 422.2H785.5M777.3 424.2H785.5M777.3 426.2H785.5" stroke-width="0.7"/></g><path d="M801.3 422.4L803 420.8H806.2L809.3 424L806.6 427.2L801.3 424.3Z" fill="#3a3d42"/><path d="M807.6 421L810.3 424L807.7 427.6" stroke="#3a3d42" stroke-width="1" fill="none"/></svg>
<svg style="position:absolute;left:756px;top:124px" width="10" height="10" viewBox="756 124 10 10"><path d="M759.5 129L764.1 126.9M759.5 129L764.1 131" stroke="#1f2226" stroke-width="0.9"/><circle cx="759.5" cy="129" r="1.4" fill="#1f2226"/><circle cx="764.1" cy="126.9" r="1.3" fill="#1f2226"/><circle cx="764.1" cy="131.1" r="1.3" fill="#1f2226"/></svg>
<div style="position:absolute;left:770.7px;top:124.5px;font-size:6.9px;font-weight:bold;line-height:9px;color:#2f3236">SHARE</div>
<div class="ttl" style="left:368.5px;top:449.2px">US Equity Factors</div><svg class="exp" style="left:532px;top:453.3px" width="7.5" height="6.2" viewBox="0 0 7.5 6.2"><rect width="7.5" height="6.2" rx="1" fill="#262a30"/><path d="M2 4.9L5.3 1.6M3 1.4H5.5V3.9" stroke="#fff" stroke-width="1" fill="none"/></svg>
<div class="card" style="left:366px;top:466px;width:180.5px;height:148.5px"><div class="hd" style="top:0"><span class="hl" style="left:5px;font-size:8.3px">1-Day Performance</span></div><div class="fcol" style="left:34.8px">Value</div><div class="fcol" style="left:82.9px">Core</div><div class="fcol" style="left:131.0px">Growth</div><div class="frow" style="top:43.7px">Large</div><div class="fcell" style="left:34.8px;top:29.7px">2.4<small>%</small></div><div class="fcell" style="left:82.9px;top:29.7px">2.6<small>%</small></div><div class="fcell" style="left:131.0px;top:29.7px">2.8<small>%</small></div><div class="frow" style="top:83.6px">Mid</div><div class="fcell" style="left:34.8px;top:69.6px">3.3<small>%</small></div><div class="fcell" style="left:82.9px;top:69.6px">3.4<small>%</small></div><div class="fcell" style="left:131.0px;top:69.6px">3.6<small>%</small></div><div class="frow" style="top:123.5px">Small</div><div class="fcell" style="left:34.8px;top:109.5px">3.3<small>%</small></div><div class="fcell" style="left:82.9px;top:109.5px">3.2<small>%</small></div><div class="fcell" style="left:131.0px;top:109.5px">3.0<small>%</small></div></div>
<div class="ttl" style="left:557.5px;top:449.2px">Global Yields</div><svg class="exp" style="left:812px;top:453.3px" width="7.5" height="6.2" viewBox="0 0 7.5 6.2"><rect width="7.5" height="6.2" rx="1" fill="#262a30"/><path d="M2 4.9L5.3 1.6M3 1.4H5.5V3.9" stroke="#fff" stroke-width="1" fill="none"/></svg>
<div class="card" style="left:555px;top:466px;width:271px;height:148.5px"><div class="hd" style="top:0"><span class="yh" style="right:120px">5Y</span><span class="yh" style="right:63px">10Y</span><span class="yh" style="right:6px">30Y</span></div><div class="yr" style="top:18.0px"><span class="flag"><svg width="15" height="10.5" viewBox="0 0 15 10.5"><rect width="15" height="10.5" rx="1.5" fill="#f2d4d7"/><g fill="#e8a8ae"><rect y="1.5" width="15" height="1.5"/><rect y="4.5" width="15" height="1.5"/><rect y="7.5" width="15" height="1.5"/></g><rect width="7" height="5.5" fill="#46598c"/></svg></span><span class="yn">United States</span><span class="yv" style="right:117px">3.823<small>%</small></span><span class="yv" style="right:60px">3.601<small>%</small></span><span class="yv" style="right:3px">3.677<small>%</small></span></div><div class="yr" style="top:36.6px"><span class="flag"><svg width="15" height="10.5" viewBox="0 0 15 10.5"><rect width="15" height="3.5" fill="#1a1a1a"/><rect y="3.5" width="15" height="3.5" fill="#dd1d1d"/><rect y="7" width="15" height="3.5" fill="#f7c520"/></svg></span><span class="yn">Germany</span><span class="yv" style="right:117px">1.699<small>%</small></span><span class="yv" style="right:60px">1.868<small>%</small></span><span class="yv" style="right:3px">1.906<small>%</small></span></div><div class="yr" style="top:55.2px"><span class="flag"><svg width="15" height="10.5" viewBox="0 0 15 10.5"><rect width="15" height="10.5" fill="#2a3a7a"/><path d="M0 0L15 10.5M15 0L0 10.5" stroke="#fff" stroke-width="2.2"/><path d="M0 0L15 10.5M15 0L0 10.5" stroke="#d22" stroke-width="0.8"/><path d="M7.5 0V10.5M0 5.25H15" stroke="#fff" stroke-width="3.4"/><path d="M7.5 0V10.5M0 5.25H15" stroke="#d22" stroke-width="2"/></svg></span><span class="yn">United Kingdom</span><span class="yv" style="right:117px">4.085<small>%</small></span><span class="yv" style="right:60px">3.851<small>%</small></span><span class="yv" style="right:3px">4.063<small>%</small></span></div><div class="yr" style="top:73.80000000000001px"><span class="flag"><svg width="15" height="10.5" viewBox="0 0 15 10.5"><rect width="15" height="10.5" fill="#d6261c"/><rect y="2.6" width="15" height="5.3" fill="#f5c22a"/><circle cx="4.5" cy="5.25" r="1.2" fill="#b5651d"/></svg></span><span class="yn">Spain</span><span class="yv" style="right:117px">2.399<small>%</small></span><span class="yv" style="right:60px">3.064<small>%</small></span><span class="yv" style="right:6px">-</span></div><div class="yr" style="top:92.4px"><span class="flag"><svg width="15" height="10.5" viewBox="0 0 15 10.5"><rect width="5" height="10.5" fill="#2f9a4a"/><rect x="5" width="5" height="10.5" fill="#f4f4f4"/><rect x="10" width="5" height="10.5" fill="#d9303a"/></svg></span><span class="yn">Italy</span><span class="yv" style="right:117px">3.345<small>%</small></span><span class="yv" style="right:60px">4.179<small>%</small></span><span class="yv" style="right:3px">3.990<small>%</small></span></div><div class="yr" style="top:111.0px"><span class="flag"><svg width="15" height="10.5" viewBox="0 0 15 10.5"><rect x="0.25" y="0.25" width="14.5" height="10" rx="1.5" fill="#fff" stroke="#e3e3e3" stroke-width="0.5"/><circle cx="7.5" cy="5.25" r="2.8" fill="#d0102b"/></svg></span><span class="yn">Japan</span><span class="yv" style="right:117px">0.045<small>%</small></span><span class="yv" style="right:60px">0.235<small>%</small></span><span class="yv" style="right:3px">1.345<small>%</small></span></div><div class="yr" style="top:129.60000000000002px"><span class="flag"><svg width="15" height="10.5" viewBox="0 0 15 10.5"><rect width="15" height="10.5" fill="#e3281d"/><circle cx="3" cy="2.8" r="1.2" fill="#f7d21c"/></svg></span><span class="yn">China</span><span class="yv" style="right:117px">2.523<small>%</small></span><span class="yv" style="right:60px">2.782<small>%</small></span><span class="yv" style="right:3px">3.144<small>%</small></span></div></div>
</div></body></html>
